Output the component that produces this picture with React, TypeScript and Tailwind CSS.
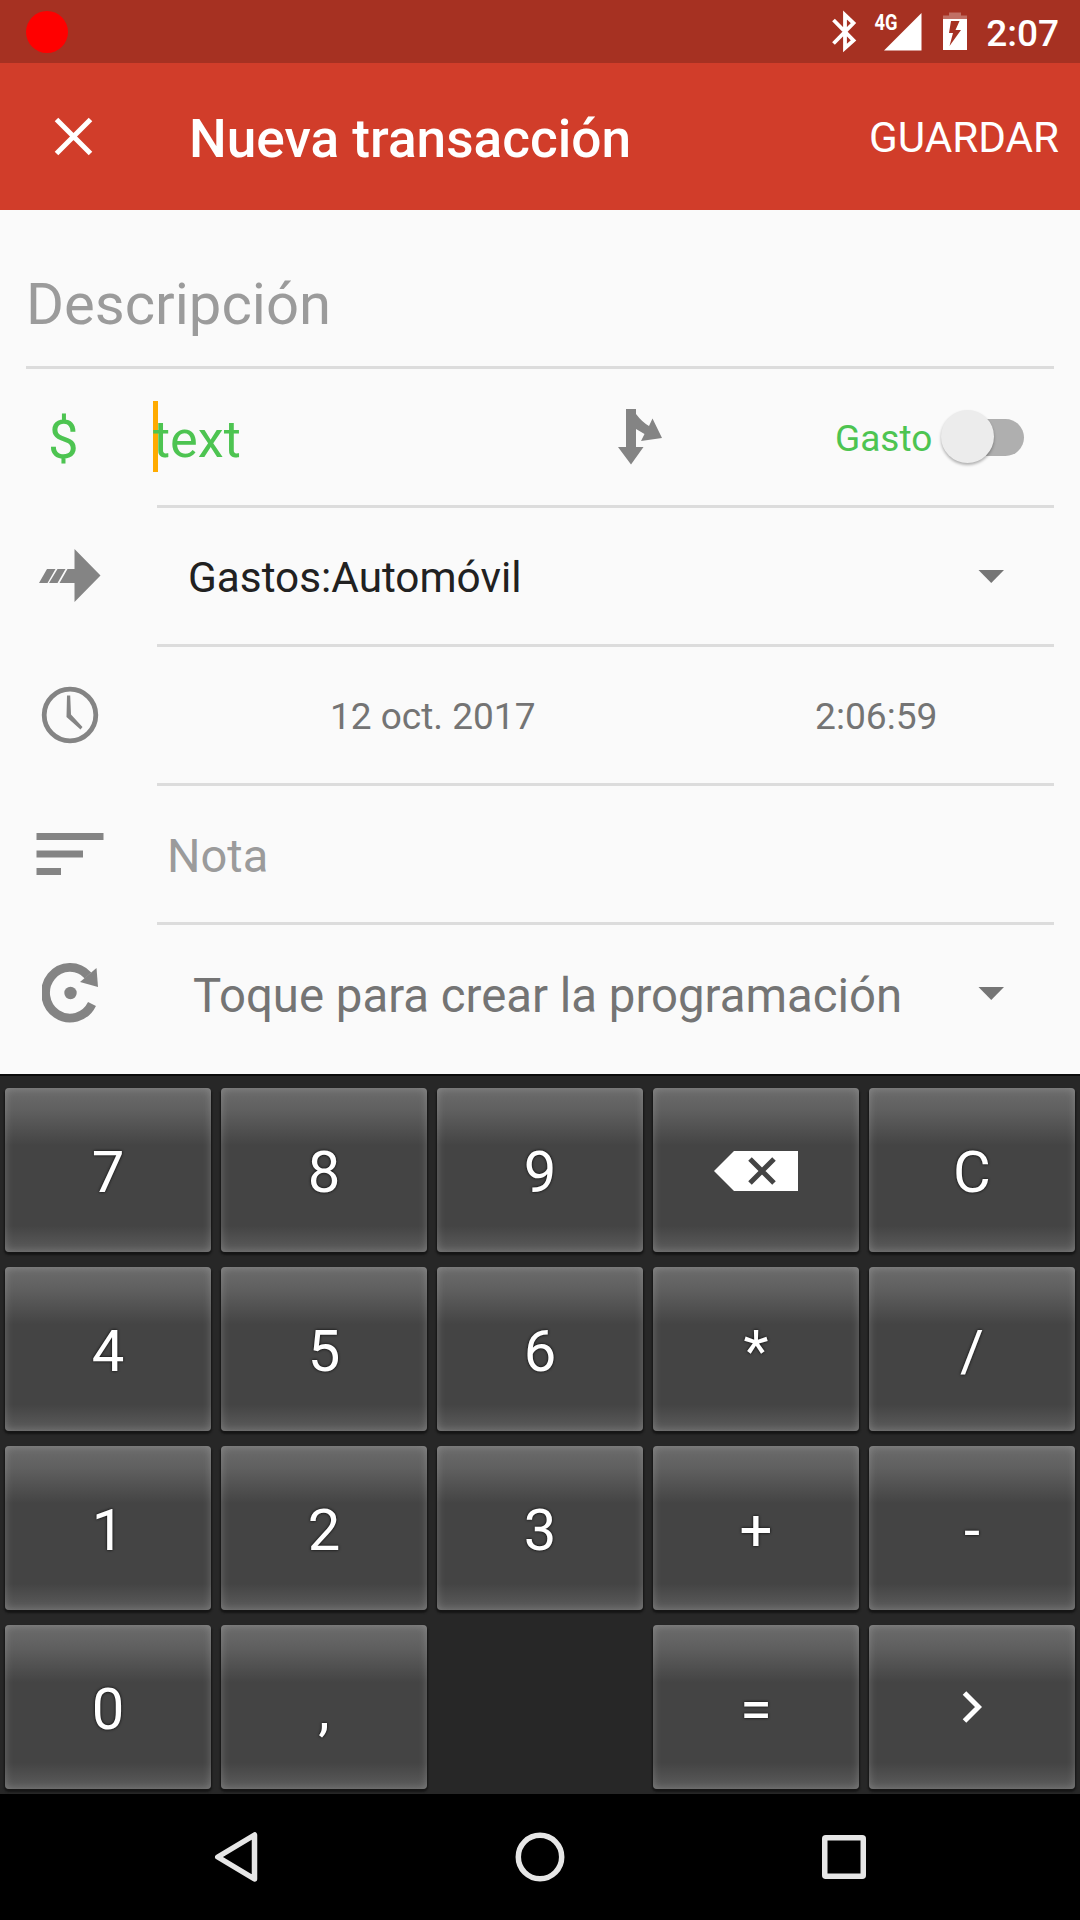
import type { ReactNode } from "react";

const G = "#848484";

function StatusBar() {
  return (
    <div className="flex h-[63px] items-center bg-[#a63122] text-white">
      <div className="ml-[26px] h-[42px] w-[42px] rounded-full bg-[#ff0000]" />
      <svg className="ml-auto h-[63px] w-[155px]" viewBox="828 0 155 63">
        <path d="M833.500 20l20 20.500-8.500 7.500V15l8.500 8-20 20.500" fill="none" stroke="#fff" strokeWidth="3.8" />
        <text x="874.500" y="29.500" fill="#fff" fontFamily="Roboto" fontSize="22" fontWeight="700" textLength="23" lengthAdjust="spacingAndGlyphs">4G</text>
        <path d="M921.500 13V50.500H884z" fill="#fff" />
        <path d="M949 12.500h12v3h6v3.500h-24v-3.500h6z" fill="#fff" fillOpacity=".3" />
        <path d="M943 19h24v31h-24zM951 21l-2 12h4l-3.500 13L961 30h-5.500l4-9z" fill="#fff" fillRule="evenodd" />
      </svg>
      <span className="mr-[21px] ml-[3px] pt-[4px] text-[37px] leading-none font-medium">2:07</span>
    </div>
  );
}

function AppBar() {
  return (
    <header className="flex h-[147px] items-center bg-[#d13d2a] text-white">
      <svg className="ml-[53px] h-[42px] w-[42px]" viewBox="0 0 42 42">
        <path d="M3.500 3.500L37.500 37.500M37.500 3.500L3.500 37.500" stroke="#fff" strokeWidth="5" />
      </svg>
      <h1 className="ml-[94px] pt-[6px] text-[53.200px] font-medium">Nueva transacción</h1>
      <span className="mr-[21px] ml-auto pt-[2px] text-[42.200px]">GUARDAR</span>
    </header>
  );
}

function Row({ icon, children, last }: { icon: ReactNode; children: ReactNode; last?: boolean }) {
  return (
    <div className={last ? "flex h-[136px]" : "flex h-[139px]"}>
      <div className={`flex w-[131px] items-center ${last ? "" : "pb-[4px]"}`}>{icon}</div>
      <div className={`flex w-[897px] items-center ${last ? "" : "border-b-[3px] border-[#dcdcdc]"}`}>{children}</div>
    </div>
  );
}

function Caret() {
  return (
    <svg className="mr-[50px] ml-auto h-[13px] w-[26px]" viewBox="0 0 26 13">
      <path d="M0.500 0h25.500L13.250 13z" fill="#757575" />
    </svg>
  );
}

function Form() {
  return (
    <main className="h-[864px] bg-[#fafafa] pl-[26px]">
      <div className="flex h-[159px] w-[1028px] items-center border-b-[3px] border-[#dcdcdc] pt-[32px] text-[58px] text-[#9b9b9b]">
        Descripción
      </div>
      <Row icon={<span className="ml-[22px] pt-[6px] text-[54.500px] leading-none text-[#4dc451]">$</span>}>
        <span className="relative -ml-[3px] w-[400px] pt-[4px] text-[52.300px] leading-[75px] text-[#4dc451]">
          <span className="absolute top-[3px] -left-[1px] h-[71px] w-[5px] bg-[#ffab00]" />
          <span className="relative -ml-[1px]">text</span>
        </span>
        <svg className="ml-[64px] h-[56px] w-[44px]" viewBox="0 0 44 56">
          <path d="M8 0H18V5Q24 13 31 17L34.500 9.500L44 29L23 32L26.500 25L18 20V38H25.500L13 55.500L0 38H8Z" fill={G} />
        </svg>
        <span className="ml-[173px] pt-[3px] text-[37px] text-[#4dc451]">Gasto</span>
        <span className="relative ml-[24px] h-[37px] w-[68px] rounded-full bg-[#afafaf]">
          <span className="absolute -top-[9px] -left-[15px] h-[53px] w-[53px] rounded-full bg-[#ececec] shadow-[0_2px_3px_rgba(0,0,0,0.3)]" />
        </span>
      </Row>
      <Row
        icon={
          <svg className="ml-[13px] h-[53px] w-[62px]" viewBox="0 0 62 53">
            <path d="M35.500 0L61.500 26.500L35.500 53V34H20.500L28.500 20H35.500ZM8 20H16.500L8.500 34H0ZM18.500 20H26.500L18.500 34H10Z" fill={G} />
          </svg>
        }
      >
        <span className="ml-[31px] pt-[3px] text-[42.300px] text-[#212121]">Gastos:Automóvil</span>
        <Caret />
      </Row>
      <Row
        icon={
          <svg className="ml-[15px] h-[58px] w-[58px]" viewBox="0 0 58 58">
            <circle cx="29" cy="29" r="25.800" fill="none" stroke={G} strokeWidth="4.800" />
            <path d="M26 9.500h3.200L30 28.500L41.500 41L39.500 43.500L25.500 31Z" fill={G} />
          </svg>
        }
      >
        <span className="ml-[173px] w-[485px] pt-[3px] text-[37px] text-[#747474]">12 oct. 2017</span>
        <span className="pt-[3px] text-[37.200px] text-[#747474]">2:06:59</span>
      </Row>
      <Row
        icon={
          <svg className="ml-[10px] h-[42px] w-[68px]" viewBox="0 0 68 42">
            <path d="M.500 0h67v7H.500zM.500 17.500h46.500v7H.500zM.500 35h24.500v7H.500z" fill={G} />
          </svg>
        }
      >
        <span className="ml-[10px] pt-[4px] text-[47px] text-[#9b9b9b]">Nota</span>
      </Row>
      <Row
        last
        icon={
          <svg className="ml-[16px] h-[60px] w-[58px]" viewBox="0 0 58 60">
            <path d="M46 12.500A24.500 25.300 0 1 0 50 41" fill="none" stroke={G} strokeWidth="8.800" />
            <path d="M54.500 5L56 24L38 19Z" fill={G} />
            <circle cx="28.500" cy="30" r="6.200" fill={G} />
          </svg>
        }
      >
        <span className="ml-[36px] pt-[7px] text-[47.350px] text-[#747474]">Toque para crear la programación</span>
        <Caret />
      </Row>
    </main>
  );
}

const keys = ["7", "8", "9", "back", "C", "4", "5", "6", "*", "/", "1", "2", "3", "+", "-", "0", ",", "", "=", "next"];

function KeyFace({ k }: { k: string }) {
  if (k === "back")
    return (
      <svg className="mb-[3px] h-[40px] w-[84px]" viewBox="0 0 84 40">
        <path d="M20 0H84V40H20L0 20Z" fill="#fff" />
        <path d="M36 8L60 32M60 8L36 32" stroke="#444" strokeWidth="5" />
      </svg>
    );
  if (k === "next")
    return (
      <svg className="mb-[5px] h-[32px] w-[20px]" viewBox="0 0 20 32">
        <path d="M2.500 2L16.500 16L2.500 30" fill="none" stroke="#fff" strokeWidth="5" />
      </svg>
    );
  return <>{k}</>;
}

function Keypad() {
  return (
    <div className="grid h-[720px] grid-cols-5 gap-x-[10px] gap-y-[15px] border-t-2 border-[#0c0c0c] bg-[#272727] px-[5px] pt-[12px] pb-[5px]">
      {keys.map((k, i) =>
        k === "" ? (
          <div key={i} />
        ) : (
          <button
            key={i}
            className="flex h-[164px] items-center justify-center rounded-[4px] bg-[linear-gradient(to_bottom,#6c6c6c_0%,#5f5f5f_14%,#444_35%,#444_84%,#5c5c5c_100%)] pt-[5px] text-[58px] text-white shadow-[0_2px_2px_1px_#151515,inset_0_0_8px_rgba(255,255,255,0.22)] [text-shadow:0_0_3px_#000]"
          >
            <KeyFace k={k} />
          </button>
        ),
      )}
    </div>
  );
}

function NavBar() {
  return (
    <nav className="h-[126px] bg-black">
      <svg className="h-[126px] w-[1080px]" viewBox="0 1794 1080 126" fill="none" stroke="#e6e6e6" strokeWidth="5.500" strokeLinejoin="round">
        <path d="M217.800 1857L254.500 1835V1879Z" />
        <circle cx="540" cy="1857" r="21.700" />
        <rect x="824.750" y="1837.750" width="38.500" height="38.500" rx="1" />
      </svg>
    </nav>
  );
}

export default function App() {
  return (
    <div className="h-[1920px] w-[1080px] overflow-hidden font-[Roboto,sans-serif] whitespace-nowrap">
      <StatusBar />
      <AppBar />
      <Form />
      <Keypad />
      <NavBar />
    </div>
  );
}
